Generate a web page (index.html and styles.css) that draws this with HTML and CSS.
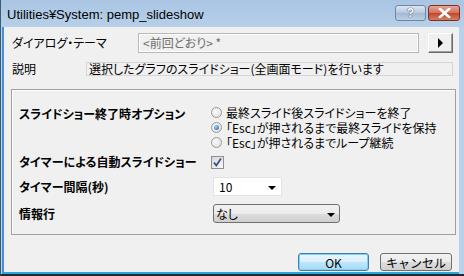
FILE: index.html
```html
<!DOCTYPE html>
<html lang="ja">
<head>
    <meta charset="UTF-8">
    <meta name="viewport" content="width=device-width, initial-scale=1.0">
    <title>pemp_slideshow</title>
    <link rel="stylesheet" href="styles.css">
</head>
<body>

<div class="window">
    <div class="titlebar">
        <span class="title">Utilities¥System: pemp_slideshow</span>
        <div class="caption-buttons">
            <span class="cap help">?</span>
            <span class="cap close">
                <svg width="13" height="10" viewBox="0 0 13 10"><path d="M2 1 L11 9 M11 1 L2 9" stroke="#fff" stroke-width="2.6" stroke-linecap="square"/></svg>
            </span>
        </div>
    </div>
    <div class="client">
        <div class="row theme-row">
            <span class="label">ダイアログ・テーマ</span>
            <div class="theme-input">&lt;前回どおり&gt; *</div>
            <button class="arrow-btn">
                <svg width="7" height="10" viewBox="0 0 7 10"><path d="M1 0 L6 5 L1 10 Z" fill="#000"/></svg>
            </button>
        </div>
        <div class="row desc-row">
            <span class="label">説明</span>
            <div class="desc-box">選択したグラフのスライドショー(全画面モード)を行います</div>
        </div>

        <div class="group">
            <div class="opt-row first">
                <span class="glabel">スライドショー終了時オプション</span>
                <div class="radios">
                    <div class="radio-item"><span class="radio"></span>最終スライド後スライドショーを終了</div>
                    <div class="radio-item"><span class="radio checked"></span>「Esc」が押されるまで最終スライドを保持</div>
                    <div class="radio-item"><span class="radio"></span>「Esc」が押されるまでループ継続</div>
                </div>
            </div>
            <div class="opt-row check-row">
                <span class="glabel">タイマーによる自動スライドショー</span>
                <span class="checkbox">
                    <svg width="11" height="11" viewBox="0 0 11 11"><path d="M2 5.5 L4.3 8.5 L9 1.5" fill="none" stroke="#3c4e8c" stroke-width="1.8"/></svg>
                </span>
            </div>
            <div class="opt-row timer-row">
                <span class="glabel">タイマー間隔(秒)</span>
                <div class="combo edit">
                    <span>10</span>
                    <span class="tri"></span>
                </div>
            </div>
            <div class="opt-row info-row">
                <span class="glabel">情報行</span>
                <div class="combo list">
                    <span>なし</span>
                    <span class="tri"></span>
                </div>
            </div>
        </div>

        <div class="footer">
            <button class="btn default">OK</button>
            <button class="btn">キャンセル</button>
        </div>
    </div>
</div>

</body>
</html>
```

FILE: styles.css
```css
body {
    margin: 0;
    padding: 0;
    font-family: "Noto Sans CJK JP", "Liberation Sans", sans-serif;
    font-size: 12px;
    line-height: 14px;
    font-feature-settings: "palt";
    background-color: #1e2a36;
}
.window {
    width: 464px;
    height: 276px;
    box-sizing: border-box;
    padding: 0 5px 0 1px;
    background: linear-gradient(#a9c5e2, #b9d1ea 30px, #b9d1ea);
    border-left: 1px solid #3d5a78;
    border-bottom: 2px solid #1e2a36;
}

.titlebar {
    height: 27px;
    display: flex;
    align-items: center;
    justify-content: space-between;
}
.title {
    font-family: "Liberation Sans", Arial, sans-serif;
    font-size: 13px;
    color: #000;
    margin-left: 5px;
    margin-top: 2px;
}
.caption-buttons {
    display: flex;
    gap: 2px;
    align-self: flex-start;
    margin-top: 5px;
    margin-right: -1px;
}
.cap {
    height: 16px;
    box-sizing: border-box;
    border-radius: 3px;
    display: flex;
    align-items: center;
    justify-content: center;
}
.help {
    width: 31px;
    border: 1px solid #6d86a3;
    background: linear-gradient(#dbe6f2, #b5c8dd 50%, #a3b9d2 51%, #bccfe3);
    font-family: "Liberation Sans", Arial, sans-serif;
    font-weight: bold;
    font-size: 12px;
    color: #fff;
    text-shadow: 0 0 1px #334a66, 0 0 1px #334a66;
}
.close {
    width: 32px;
    border: 1px solid #7b2d22;
    background: linear-gradient(#e8a596, #d2705c 50%, #c2452c 51%, #d5805f);
}

.client {
    height: 247px;
    box-sizing: border-box;
    background-color: #f0f0f0;
    border-left: 2px solid #4a8fd2;
    border-bottom: 2px solid #2aa8d8;
}

.row {
    display: flex;
    align-items: center;
}
.label {
    width: 74px;
    padding-left: 8px;
    flex-shrink: 0;
    color: #000;
    white-space: nowrap;
}
.theme-row {
    padding-top: 6px;
    height: 20px;
}
.theme-row .label {
    width: 126px;
}
.theme-input {
    width: 281px;
    height: 20px;
    box-sizing: border-box;
    border: 1px solid #b8b8b8;
    box-shadow: inset 0 0 0 1px #fff;
    color: #6d6d6d;
    padding-left: 4px;
    line-height: 18px;
}
.arrow-btn {
    margin-left: 9px;
    width: 25px;
    height: 20px;
    padding: 0;
    background-color: #f0f0f0;
    border: 1px solid;
    border-color: #fff #696969 #696969 #fff;
    box-shadow: inset -1px -1px 0 #a0a0a0;
    display: flex;
    align-items: center;
    justify-content: center;
}
.desc-row {
    margin-top: 9px;
    height: 14px;
}
.desc-box {
    width: 367px;
    height: 14px;
    box-sizing: border-box;
    border: 1px solid #d6d6d6;
    padding-left: 2px;
    line-height: 12px;
    color: #000;
    white-space: nowrap;
}

.group {
    margin: 13px 3px 0 7px;
    height: 146px;
    box-sizing: border-box;
    border: 1px solid #a0a0a0;
    box-shadow: inset 1px 1px 0 #fff;
    padding: 15px 0 0 7px;
}
.opt-row {
    display: flex;
    align-items: center;
}
.glabel {
    width: 192px;
    flex-shrink: 0;
    font-weight: bold;
    color: #000;
    white-space: nowrap;
}
.opt-row.first {
    align-items: flex-start;
}
.opt-row.first .glabel {
    line-height: 17px;
}
.radio-item {
    height: 15px;
    display: flex;
    align-items: center;
    color: #000;
    white-space: nowrap;
}
.radio {
    width: 11px;
    height: 11px;
    box-sizing: border-box;
    border-radius: 50%;
    border: 1px solid #9a9a9a;
    background: radial-gradient(circle at 40% 40%, #fdfdfd, #d8d8d8);
    margin-right: 4px;
    position: relative;
    flex-shrink: 0;
}
.radio.checked::after {
    content: "";
    position: absolute;
    left: 2px;
    top: 2px;
    width: 5px;
    height: 5px;
    border-radius: 50%;
    background: radial-gradient(circle at 35% 35%, #9ad3f5, #1f5fa8);
}
.check-row {
    margin-top: 3px;
    height: 18px;
}
.checkbox {
    width: 13px;
    height: 13px;
    box-sizing: border-box;
    border: 1px solid #8e8f8f;
    background: linear-gradient(135deg, #d8d8d8, #f8f8f8);
    display: flex;
    align-items: center;
    justify-content: center;
}
.timer-row {
    margin-top: 6px;
    height: 19px;
}
.info-row {
    margin-top: 8px;
    height: 19px;
}
.combo {
    height: 19px;
    box-sizing: border-box;
    display: flex;
    align-items: center;
    justify-content: space-between;
    color: #000;
    margin-left: 2px;
}
.combo.edit {
    width: 69px;
    background-color: #fff;
    border: 1px solid #e2e2e2;
    padding: 0 5px 0 5px;
}
.combo.list {
    width: 127px;
    border: 1px solid #707070;
    border-radius: 3px;
    background: linear-gradient(#f2f2f2, #ebebeb 50%, #dddddd 51%, #cfcfcf);
    padding: 0 4px 0 2px;
}
.tri {
    width: 0;
    height: 0;
    border-left: 4px solid transparent;
    border-right: 4px solid transparent;
    border-top: 4px solid #000;
    margin-top: 2px;
}

.footer {
    display: flex;
    justify-content: flex-end;
    gap: 11px;
    margin-top: 18px;
    padding-right: 7px;
}
.btn {
    height: 18px;
    box-sizing: border-box;
    padding: 0;
    font-family: "Noto Sans CJK JP", "Liberation Sans", sans-serif;
    font-size: 12px;
    line-height: 15px;
    color: #000;
    width: 72px;
    border: 1px solid #707070;
    border-radius: 3px;
    background: linear-gradient(#f2f2f2, #ebebeb 50%, #dddddd 51%, #cfcfcf);
}
.btn.default {
    width: 71px;
    border-color: #3c7fb1;
    background: linear-gradient(#eaf6fd, #d9f0fc 50%, #bee6fd 51%, #a7d9f5);
    box-shadow: inset 0 0 0 1px #7ed0f4;
}
```
